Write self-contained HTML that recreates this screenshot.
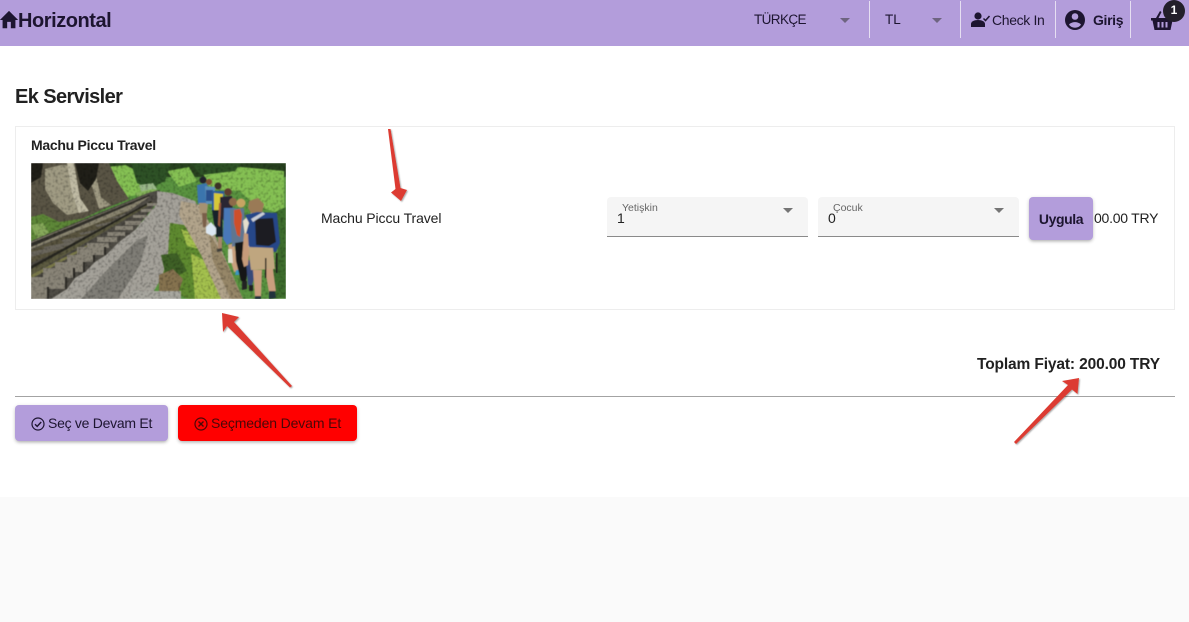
<!DOCTYPE html>
<html lang="tr"><head><meta charset="utf-8"><title>Ek Servisler</title>
<style>
html,body{margin:0;padding:0;width:1189px;height:622px;overflow:hidden;background:#fff;font-family:"Liberation Sans",Arial,sans-serif;color:#212121}
.a{position:absolute;white-space:nowrap}
.sep{position:absolute;top:1px;width:1px;height:37px;background:#e6dff2}
.tri{position:absolute;width:0;height:0;border-left:5px solid transparent;border-right:5px solid transparent;border-top:5px solid #6e6480}
.tri2{position:absolute;width:0;height:0;border-left:5px solid transparent;border-right:5px solid transparent;border-top:5px solid #757575}
.field{position:absolute;top:197px;width:201px;height:39px;background:#f5f5f5;border-bottom:1px solid #8a8a8a;border-radius:4px 4px 0 0}
.btn{position:absolute;border-radius:4px;box-shadow:0 2px 3px -1px rgba(0,0,0,.25),0 1px 4px rgba(0,0,0,.14)}
</style></head><body>
<div class="a" style="left:0;top:0;width:1189px;height:46px;background:#b39ddb"></div>
<svg class="a" style="left:-2px;top:9px" width="22" height="22" viewBox="0 0 24 24"><path fill="#1d1530" d="M10 21v-7h4v7h5v-9h3L12 2 2 12h3v9z"/></svg>
<div class="a" style="left:18px;top:10px;font-size:20px;line-height:23px;font-weight:bold;color:#1d1530;letter-spacing:-.45px">Horizontal</div>
<div class="a" style="left:754px;top:12px;font-size:13.5px;line-height:16px;color:#1d1530;letter-spacing:-.6px">TÜRKÇE</div>
<div class="tri" style="left:840px;top:18px"></div>
<div class="sep" style="left:869px"></div>
<div class="a" style="left:885px;top:12px;font-size:13.5px;line-height:16px;color:#1d1530">TL</div>
<div class="tri" style="left:932px;top:18px"></div>
<div class="sep" style="left:960px"></div>
<svg class="a" style="left:971px;top:12px" width="19" height="16" viewBox="0 0 19 16"><circle cx="7" cy="4" r="3.6" fill="#1d1530"/><path fill="#1d1530" d="M0 15v-3c0-2.500 3-4 7-4s7 1.500 7 4v3z"/><path fill="none" stroke="#1d1530" stroke-width="1.500" d="M12.500 6.500l2 2 4-4.500"/></svg>
<div class="a" style="left:992px;top:12px;font-size:14px;line-height:16px;color:#1d1530;letter-spacing:-.35px">Check In</div>
<div class="sep" style="left:1055px"></div>
<svg class="a" style="left:1063px;top:8px" width="24" height="24" viewBox="0 0 24 24"><path fill="#1d1530" d="M12 2a10 10 0 1 0 0 20 10 10 0 0 0 0-20zm0 3.200a3.300 3.300 0 1 1 0 6.600 3.300 3.300 0 0 1 0-6.600zm0 14.600a7.700 7.700 0 0 1-6-3c.6-1.700 4-2.700 6-2.700s5.400 1 6 2.700a7.700 7.700 0 0 1-6 3z"/></svg>
<div class="a" style="left:1093px;top:12px;font-size:14px;line-height:16px;font-weight:bold;color:#1d1530;letter-spacing:-.35px">Giriş</div>
<div class="sep" style="left:1130px"></div>
<svg class="a" style="left:1151px;top:11px" width="23" height="20" viewBox="0 0 23 20"><path fill="#1d1530" d="M0 7h23v2.500h-1.500L19.500 19h-16L1.500 9.500H0zM5 7l4-7 1.500 1L7.500 7z"/><path fill="#b39ddb" d="M6.500 11h2v5.500h-2zM10.500 11h2v5.500h-2zM14.500 11h2v5.500h-2z"/></svg>
<div class="a" style="left:1163px;top:0;width:22px;height:22px;border-radius:50%;background:#231f2a;color:#fff;font-size:12px;line-height:21px;font-weight:bold;text-align:center">1</div>

<div class="a" style="left:15px;top:85px;font-size:20px;line-height:24px;font-weight:bold;letter-spacing:-.6px">Ek Servisler</div>
<div class="a" style="left:15px;top:126px;width:1158px;height:182px;border:1px solid #ededed"></div>
<div class="a" style="left:31px;top:137px;font-size:14px;line-height:16px;font-weight:bold;color:#212121;letter-spacing:-.28px">Machu Piccu Travel</div>

<svg class="a" style="left:31px;top:163px" width="255" height="136" viewBox="0 0 255 136">
<defs>
<filter id="t" x="0" y="0" width="100%" height="100%" color-interpolation-filters="sRGB">
<feTurbulence type="fractalNoise" baseFrequency=".4" numOctaves="2" seed="4" result="n"/>
<feColorMatrix in="n" type="matrix" values=".9 0 0 0 .52  .9 0 0 0 .52  .9 0 0 0 .52  0 0 0 0 1" result="g"/>
<feBlend in="SourceGraphic" in2="g" mode="multiply" result="m"/>
<feGaussianBlur in="m" stdDeviation=".6"/>
</filter>
<filter id="b" x="-5%" y="-5%" width="110%" height="110%"><feGaussianBlur stdDeviation=".5"/></filter>
<clipPath id="c"><rect width="255" height="136"/></clipPath></defs>
<g clip-path="url(#c)">
<g filter="url(#t)">
<rect width="255" height="136" fill="#5a9440"/>
<rect x="60" width="195" height="14" fill="#28421f"/>
<path fill="#86c254" d="M75 4l20-2 14 8 4 20-24 6zM136 8l22-4 8 14-18 6zM170 6l40-2 43 4v44l-30-10-14-14-30-2z"/>
<path fill="#2e5226" d="M100 0h40l-6 18-16 8-12-6zM160 0h50l-6 8-34 4z"/>
<path fill="#3f6f2e" d="M242 50l13-6v91h-16l3-30 5-18-8-14z"/>
<path fill="#9bb98a" d="M108 22l14-2 4 6-14 8z"/>
<path fill="#86b55a" d="M104 30l18-4 6 2-20 8z"/>
<path fill="#5a5545" d="M0 0h78l8 18 12 18-30 12-25 12-18 0-25 6z"/>
<path fill="#a19c84" d="M14 6l16-4 10 0 6 40 10 6-20 4-14-12-8-14zM54 12l10-4 6 26 10 8-12 4-6-20z"/>
<path fill="#c1bca5" d="M36 0l7 0 6 35 9 13-10 2-7-20z"/>
<path fill="#201f18" d="M44 0h24l-3 16-8 12-8-8zM0 0h12l-2 14-10 6z"/>
<path fill="#5e8838" d="M0 54l12-3 16 8 28-4 30-10 30-12-4 6-50 22-62 18z"/>
<path fill="#86a95a" d="M0 62l12-2 6 10-12 6z"/>
<path fill="#4f4c45" d="M0 78L117 30 128 27 132 32 100 72 40 136H0z"/>
<path fill="#8a8570" d="M0 79L116 32l2 2-20 14L0 86z"/>
<path fill="#59543f" d="M0 87L98 47 40 84 0 100z"/>
<g fill="#6a665c"><path d="M0 89l30-7 4 3-34 9zM12 84l32-6 3 3-32 6zM30 77l30-5 3 2-30 6zM48 70l26-5 2 2-26 5zM64 62l24-5 2 2-24 5zM78 55l20-5 2 2-20 4z"/></g>
<path fill="#33312b" d="M0 80L117 32l2 1L0 84z"/>
<path fill="#5c5a40" d="M0 103L120 38l2 2L0 112z"/>
<path fill="#26251f" d="M0 103L120 38l1 1L0 106z"/>
<path fill="#7b7a4a" d="M0 112L60 80l-10 8L0 116z"/>
<g fill="#8a8578"><path d="M0 114h34v12H0zM0 124h16v12H0zM12 105h30v10H12zM24 99h28v10H24zM36 92h26v7H36zM46 84h27v8H46zM56 80h22v5H56zM66 74h20v5H66zM76 69h18v4H76zM84 63h18v4H84zM94 58h16v4H94zM102 52h14v3H102zM110 46h12v3H110zM116 40h10v3H116z"/></g>
<g fill="#2e2c27"><path d="M34 114h2v12h-2zM16 124h2v12h-2zM42 105h2v10h-2zM52 99h2v10h-2zM62 92h2v7h-2zM73 84h2v8h-2z"/></g>
<path fill="#a5a29a" d="M126 28l16 2 22 8 14 24-28 6-8 28-24 40H20l16-10 8-11 10-6 10-10 11-7 13-13 16-12 22-26z"/>
<path fill="#807e77" d="M75 108l30-30 12-6-8 30-22 34H50z"/>
<path fill="#5f8b30" d="M139 60l14 2 26 30 26 44h-48l-28-14 8-30z"/>
<path fill="#a5c24e" d="M160 90l18 10 20 36h-34zM150 66l10 4 8 16-12-3z"/>
<path fill="#3f6126" d="M130 92l16-2 10 18-20 10z"/>
<path fill="#86734f" d="M128 112l14-6 10 10-4 12-20 0z"/>
<path fill="#a9a8a0" d="M100 128h50v8h-50z"/>
<path fill="#b3a58c" d="M150 38l20 4 14 30 28 64h-22l-20-44-22-40z"/>
<path fill="#978768" d="M178 70l14 22 20 44h-12l-18-38z"/>
</g>
<g filter="url(#b)">
<!-- person 1 -->
<circle cx="172" cy="17" r="3.500" fill="#21242c"/>
<path fill="#3a74ad" d="M166 22l10-2 2 20-11 1z"/>
<path fill="#a59272" d="M168 40l9 0-1 10-7 1z"/>
<path fill="#7a5f48" d="M171 50h5l-1 14-3 0z"/>
<!-- person 2 -->
<circle cx="178" cy="19" r="3" fill="#7d4f33"/>
<path fill="#5c8fb8" d="M174 23l10 1 0 17-9 0z"/>
<path fill="#2c4f8a" d="M175 27l7 0 0 11-7 0z"/>
<!-- person 3 yellow -->
<circle cx="187" cy="23" r="3.500" fill="#3a3026"/>
<path fill="#2c5c9a" d="M181 28l12 0 1 20-13 0z"/>
<path fill="#d6c838" d="M183 30l9 1-1 15-4 4-4-3z"/>
<path fill="#16202a" d="M181 47l10 0 1 27-7 0z"/>
<path fill="#dbe7f2" d="M175 64l5-5 5 6 0 6-4 2-6-3z"/>
<path fill="#a5866a" d="M187 74l4 0 0 13-4 1z"/>
<path fill="#3f3f3a" d="M186 86l5-1 0 3-5 1z"/>
<!-- person 4 -->
<circle cx="197" cy="29" r="3.700" fill="#5c3e2d"/>
<path fill="#2a2630" d="M189 34l12-1 1 18-9 8-4-8z"/>
<path fill="#a05c3c" d="M188 40l2 0-1 24-2-2z"/>
<!-- person 5 -->
<circle cx="202" cy="39" r="4" fill="#8e6a48"/>
<path fill="#4a78b8" d="M193 45l11 0-1 33-7 4-4-6z"/>
<path fill="#c9a17f" d="M197 82l6-2 5 28-5 1-3-10z"/>
<path fill="#3c96c2" d="M205 107l3 0 0 5-4 0z"/>
<path fill="#dedccd" d="M197 86l4 0 1 14-5 0z"/>
<!-- person 6 orange -->
<circle cx="210" cy="40" r="4.500" fill="#c7a463"/>
<path fill="#5f7690" d="M199 46l14-1 2 34-14 5z"/>
<path fill="#cd4f2a" d="M203 47l6-1 2 6-2 22-3-2-3-12z"/>
<path fill="#141414" d="M204 80l11-2 3 24-3 16-5 0-5-20z"/>
<path fill="#38487a" d="M215 98l7-2 1 20-2 6-4 0z"/>
<path fill="#232323" d="M211 118l5 0 0 8-5 1zM218 122l4 0 0 6-4 0z"/>
<!-- person 7 main -->
<path fill="#9a7a56" d="M218 38l9-3 6 6-2 9-11 0-3-5z"/>
<path fill="#e6dfcc" d="M212 58l8-8 6 2 0 36-10 0z"/>
<path fill="#264788" d="M214 52l12-3 20 1 3 30-4 9-25-1-6-14 4-14z"/>
<path fill="#1c1c20" d="M224 56l18-1 3 24-7 4-13-1z"/>
<path fill="#c9ced6" d="M220 56l12-7 2 2-12 8z"/>
<path fill="#bfa67f" d="M217 84l25 1 2 21-24 1z"/>
<path fill="#c69b7a" d="M213 70l4 1 1 20 -1 11-4 2-2-8z"/>
<path fill="#c99e7e" d="M222 107l9 0-1 28-6 0zM234 106l8 0 3 22-7 2z"/>
<path fill="#24303c" d="M238 128l6 0 1 7-7 1zM224 133l6 0 0 3-6 0z"/>
<path fill="#1b1b1b" d="M234 95h1.500v20H234zM245 90h1.500v20H245z"/>
</g>
</g>
</svg>

<div class="a" style="left:321px;top:210px;font-size:14px;line-height:16px;color:#212121;letter-spacing:-.1px">Machu Piccu Travel</div>

<div class="field" style="left:607px"></div>
<div class="a" style="left:622px;top:202px;font-size:10.5px;line-height:12px;color:#666">Yetişkin</div>
<div class="a" style="left:617px;top:210px;font-size:14px;line-height:16px;color:#212121">1</div>
<div class="tri2" style="left:783px;top:208px"></div>
<div class="field" style="left:818px"></div>
<div class="a" style="left:833px;top:202px;font-size:10.5px;line-height:12px;color:#666">Çocuk</div>
<div class="a" style="left:828px;top:210px;font-size:14px;line-height:16px;color:#212121">0</div>
<div class="tri2" style="left:994px;top:208px"></div>

<div class="btn" style="left:1029px;top:197px;width:64px;height:43px;background:#b39ddb"></div>
<div class="a" style="left:1029px;top:211px;width:64px;text-align:center;font-size:14px;line-height:16px;font-weight:bold;color:#1d1530;letter-spacing:-.4px">Uygula</div>
<div class="a" style="left:1094px;top:210px;font-size:14px;line-height:16px;color:#212121;letter-spacing:-.25px">00.00 TRY</div>

<div class="a" style="left:977px;top:356px;font-size:15.5px;line-height:18px;font-weight:bold;color:#212121;letter-spacing:-.13px">Toplam Fiyat: 200.00 TRY</div>
<div class="a" style="left:15px;top:396px;width:1160px;height:1px;background:#a3a3a3"></div>

<div class="btn" style="left:15px;top:405px;width:153px;height:36px;background:#b39ddb"></div>
<svg class="a" style="left:31px;top:417px" width="14" height="14" viewBox="0 0 14 14"><circle cx="7" cy="7" r="6" fill="none" stroke="#1d1530" stroke-width="1.200"/><path fill="none" stroke="#1d1530" stroke-width="1.400" d="M4 7.200l2.200 2.200L10.200 5"/></svg>
<div class="a" style="left:48px;top:415px;font-size:14px;line-height:16px;color:#1d1530;letter-spacing:-.27px">Seç ve Devam Et</div>
<div class="btn" style="left:178px;top:405px;width:179px;height:36px;background:#ff0000"></div>
<svg class="a" style="left:194px;top:417px" width="14" height="14" viewBox="0 0 14 14"><circle cx="7" cy="7" r="6" fill="none" stroke="#4a0808" stroke-width="1.200"/><path fill="none" stroke="#4a0808" stroke-width="1.400" d="M4.500 4.500l5 5M9.500 4.500l-5 5"/></svg>
<div class="a" style="left:211px;top:415px;font-size:14px;line-height:16px;color:#4a0808;letter-spacing:-.13px">Seçmeden Devam Et</div>

<div class="a" style="left:0;top:497px;width:1189px;height:125px;background:#fafafa"></div>

<svg class="a" style="left:0;top:0;pointer-events:none" width="1189" height="622" viewBox="0 0 1189 622">
<defs><filter id="s" x="-30%" y="-30%" width="160%" height="160%"><feDropShadow dx="1" dy="1" stdDeviation=".8" flood-color="#000" flood-opacity=".35"/></filter></defs>
<g fill="#dc3b30" filter="url(#s)">
<path d="M388 129l2.500 0 10 59 6.500 2-6 11-10-8.500 4.500-3.500z"/>
<path d="M222 313l17 4-5 5 58 64-2 1.500-63-61.500-4 6z"/>
<path d="M1014 442l54-57-6-4 17-3-1.500 16-5.500-4.500-56 54.500z"/>
</g>
</svg>
</body></html>
